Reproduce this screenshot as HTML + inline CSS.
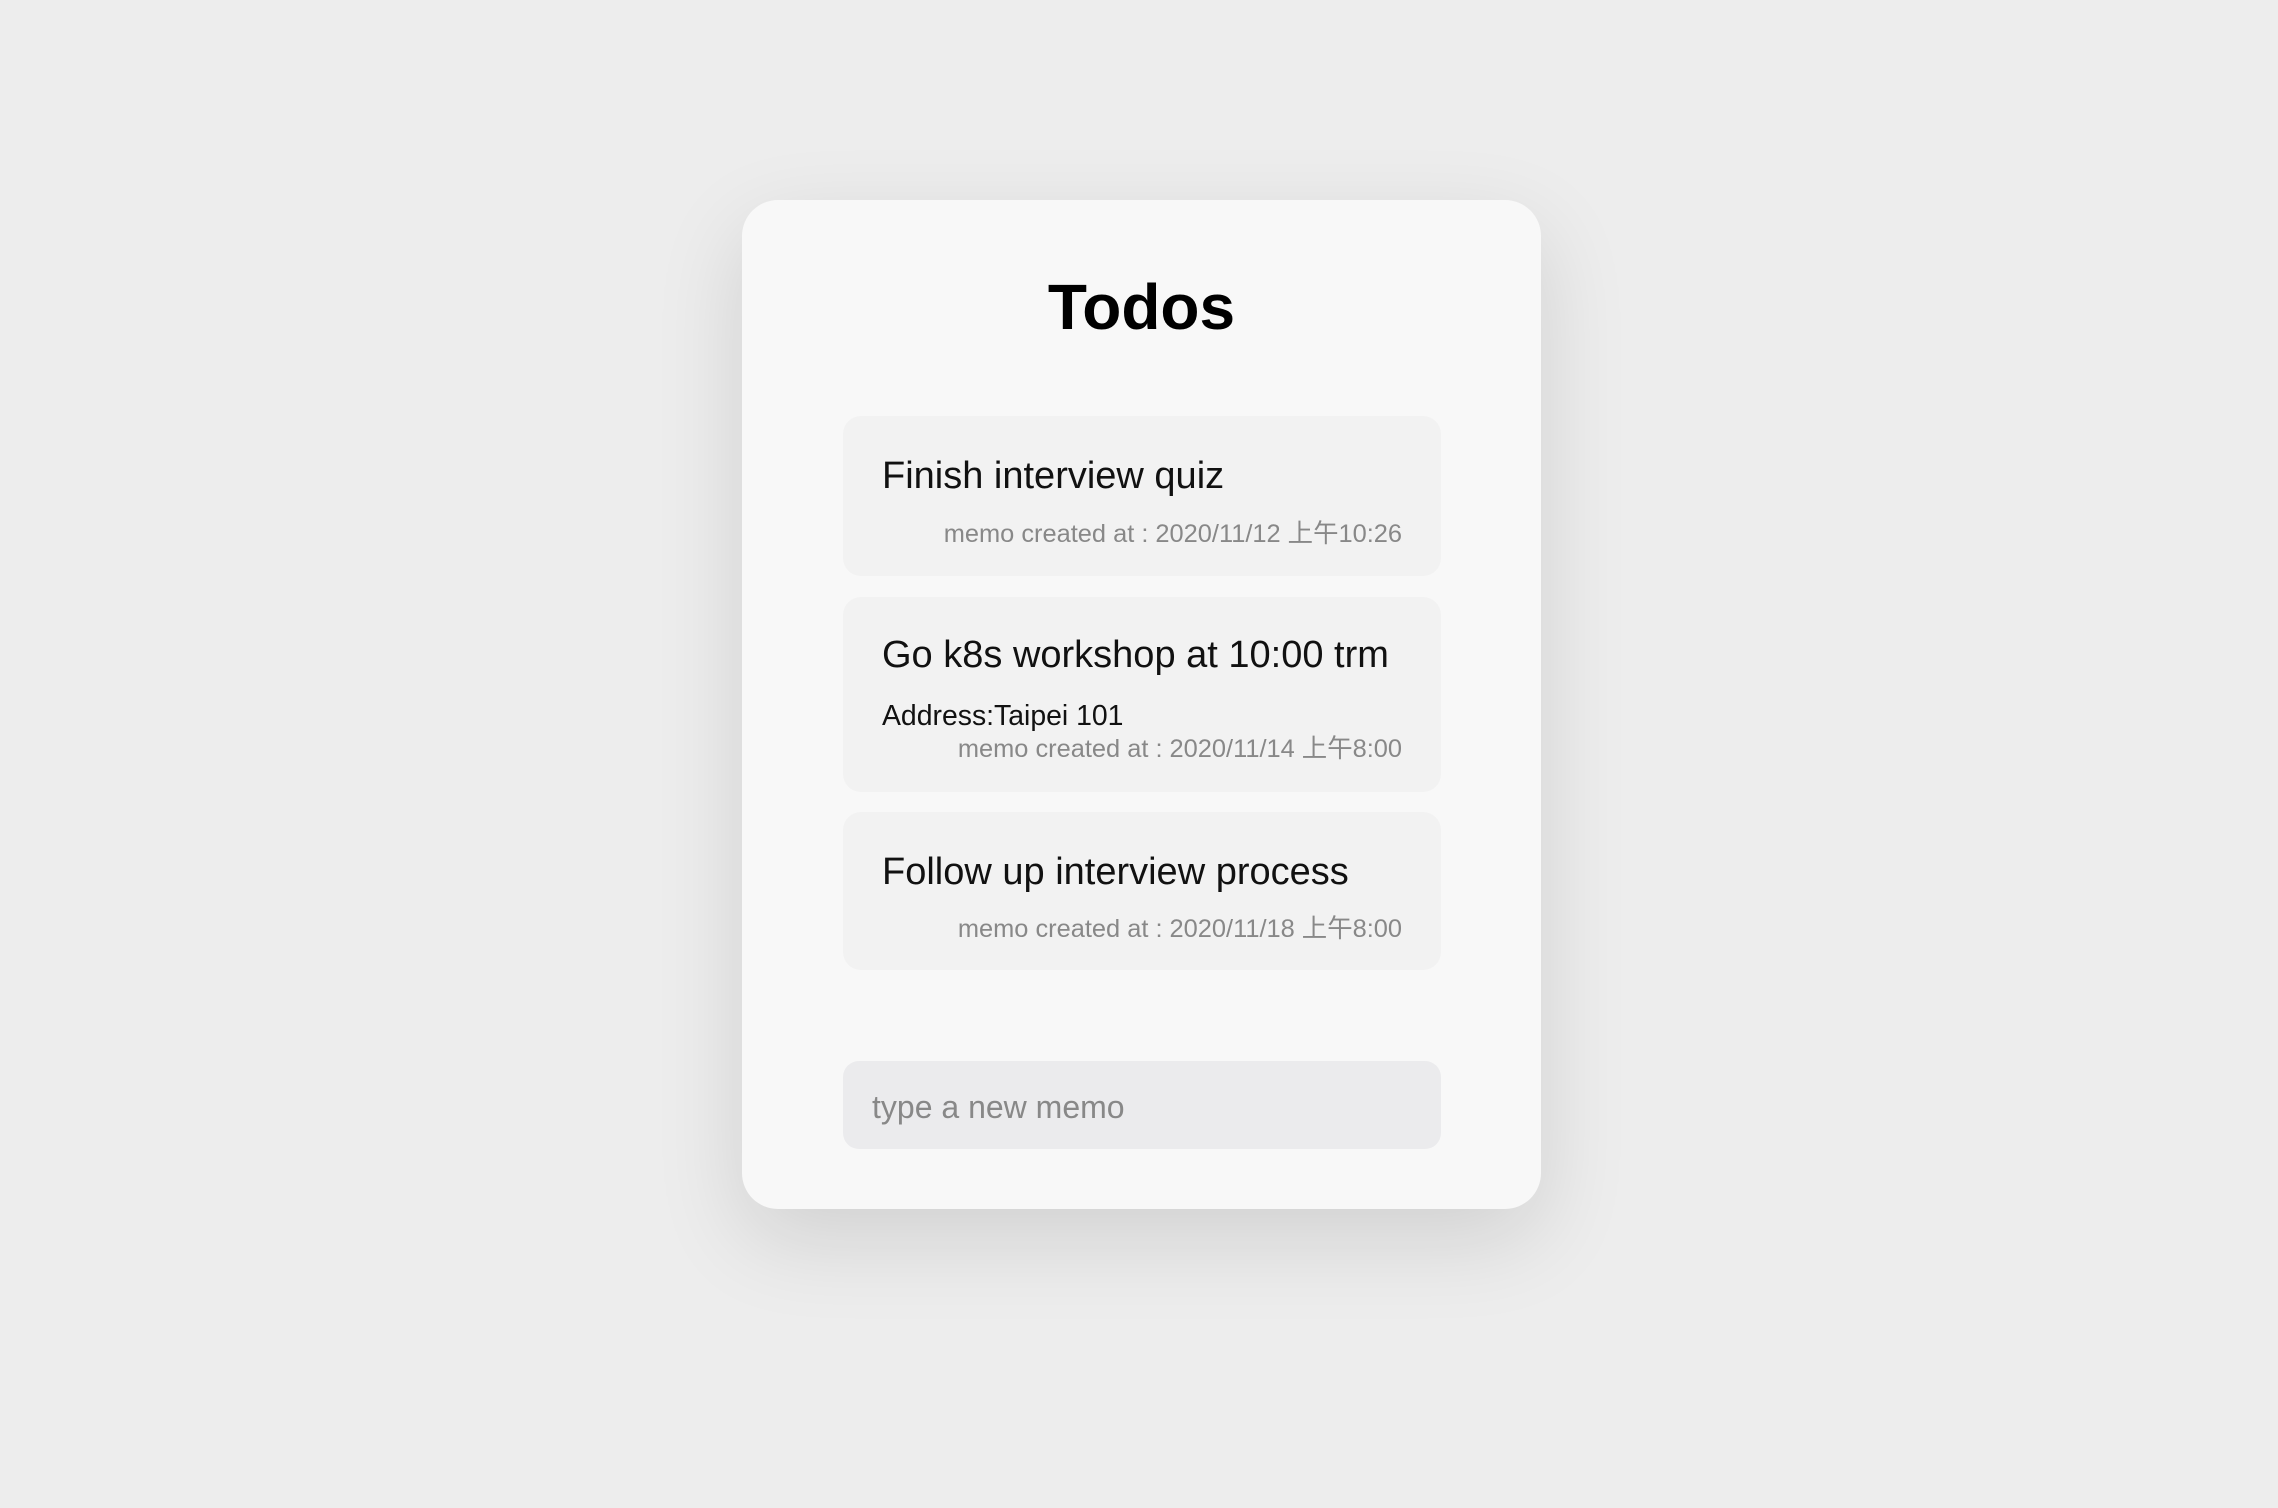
<!DOCTYPE html>
<html><head><meta charset="utf-8"><style>
html,body{margin:0;padding:0}
body{width:2278px;height:1508px;background:#ededed;position:relative;overflow:hidden;font-family:"Liberation Sans","Noto Sans CJK TC",sans-serif}
.card{position:absolute;left:742px;top:200px;width:799px;height:1009px;background:#f8f8f8;border-radius:36px;box-shadow:0 30px 90px rgba(0,0,0,0.12)}
.t{position:absolute;line-height:1;white-space:nowrap}
.item{position:absolute;left:843px;width:598px;background:#f2f2f2;border-radius:18px}
.ti{font-size:38px;color:#111;left:882px}
.meta{font-size:25.4px;color:#888;right:876px}
</style></head><body>
<div class="card"></div>
<div class="t" style="left:0;width:2283px;text-align:center;top:275px;font-size:64px;font-weight:bold;color:#000">Todos</div>
<div class="item" style="top:416px;height:160px"></div>
<div class="item" style="top:597px;height:195px"></div>
<div class="item" style="top:812px;height:158px"></div>
<div class="t ti" style="top:457px">Finish interview quiz</div>
<div class="t meta" style="top:522px">memo created at : 2020/11/12 上午10:26</div>
<div class="t ti" style="top:636px">Go k8s workshop at 10:00 trm</div>
<div class="t" style="left:882px;top:702px;font-size:28.4px;color:#111">Address:Taipei 101</div>
<div class="t meta" style="top:737px">memo created at : 2020/11/14 上午8:00</div>
<div class="t ti" style="top:853px">Follow up interview process</div>
<div class="t meta" style="top:917px">memo created at : 2020/11/18 上午8:00</div>
<div style="position:absolute;left:843px;top:1061px;width:598px;height:88px;background:#ebebed;border-radius:16px"></div>
<div class="t" style="left:872px;top:1091px;font-size:32px;color:#888">type a new memo</div>
</body></html>
